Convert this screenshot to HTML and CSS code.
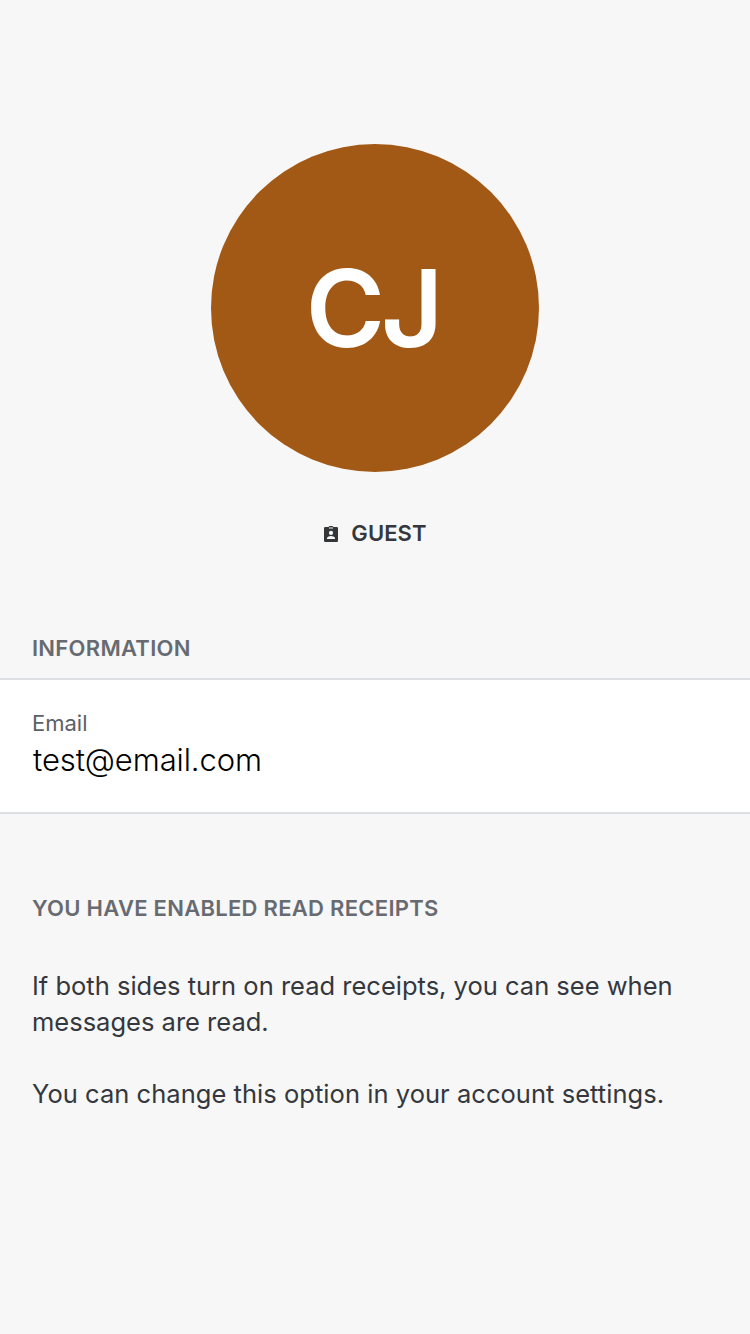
FILE: index.html
```html
<!DOCTYPE html>
<html lang="en">
<head>
<meta charset="utf-8">
<title>Profile</title>
<link rel="stylesheet" href="styles.css">
</head>
<body>
<main class="profile">
  <header class="hero">
    <div class="avatar"><span class="initials">CJ</span></div>
    <div class="badge">
      <svg class="badge-icon" viewBox="0 0 14 16"><path fill="#33373a" fill-rule="evenodd" d="M1.300 1H4.500Q5 0 6 0H8Q9 0 9.500 1H12.700Q14 1 14 2.300V14.700Q14 16 12.700 16H1.300Q0 16 0 14.700V2.300Q0 1 1.300 1ZM5 1.500V2.500H9V1.500ZM7 4.800A2.100 2.100 0 1 0 7 9A2.100 2.100 0 1 0 7 4.800ZM3 13H11V11.800Q10 10 7 10T3 11.800Z"/></svg>
      <span class="badge-text">GUEST</span>
    </div>
  </header>
  <section class="information">
    <h2 class="heading">INFORMATION</h2>
    <div class="card">
      <div class="label">Email</div>
      <div class="value">test@email.com</div>
    </div>
  </section>
  <section class="receipts">
    <h2 class="heading">YOU HAVE ENABLED READ RECEIPTS</h2>
    <p class="copy">If both sides turn on read receipts, you can see when<br>messages are read.</p>
    <p class="copy copy-last">You can change this option in your account settings.</p>
  </section>
</main>
</body>
</html>
```

FILE: styles.css
```css
* { box-sizing: border-box; }
body { margin: 0; background: #f7f7f7; font-family: Inter, sans-serif; color: #34373d; }
.profile { display: flex; flex-direction: column; height: 1334px; padding-top: 144px; }
.hero { display: flex; flex-direction: column; align-items: center; height: 486px; }
.avatar { display: flex; align-items: center; justify-content: center; width: 328px; height: 328px; padding-right: 5px; border-radius: 50%; background: #a25915; color: #fff; }
.initials { font-size: 107.500px; font-weight: 600; line-height: 130px; letter-spacing: -4px; }
.badge { display: flex; align-items: center; gap: 13px; height: 28px; margin-top: 48px; padding-left: 1px; }
.badge-icon { width: 14px; height: 16px; }
.badge-text { padding-bottom: 2px; font-size: 22px; font-weight: 600; letter-spacing: .1px; }
.heading { margin: 0; padding: 0 32px; font-size: 22px; line-height: 36px; font-weight: 600; letter-spacing: .28px; color: #676b71; }
.card { height: 136px; margin-top: 12px; padding: 29px 32px 0; background: #fff; border-top: 2px solid #dce0e3; border-bottom: 2px solid #dce0e3; }
.label { font-size: 22px; line-height: 28px; color: #5c6067; }
.value { margin-top: 3px; padding-left: 1px; font-size: 31px; line-height: 40px; font-weight: 300; letter-spacing: -.1px; color: #000; }
.receipts { margin-top: 76px; }
.copy { margin: 42px 32px 0; font-size: 25.500px; line-height: 36px; white-space: nowrap; }
.copy-last { margin-top: 36px; letter-spacing: .04px; }
```
